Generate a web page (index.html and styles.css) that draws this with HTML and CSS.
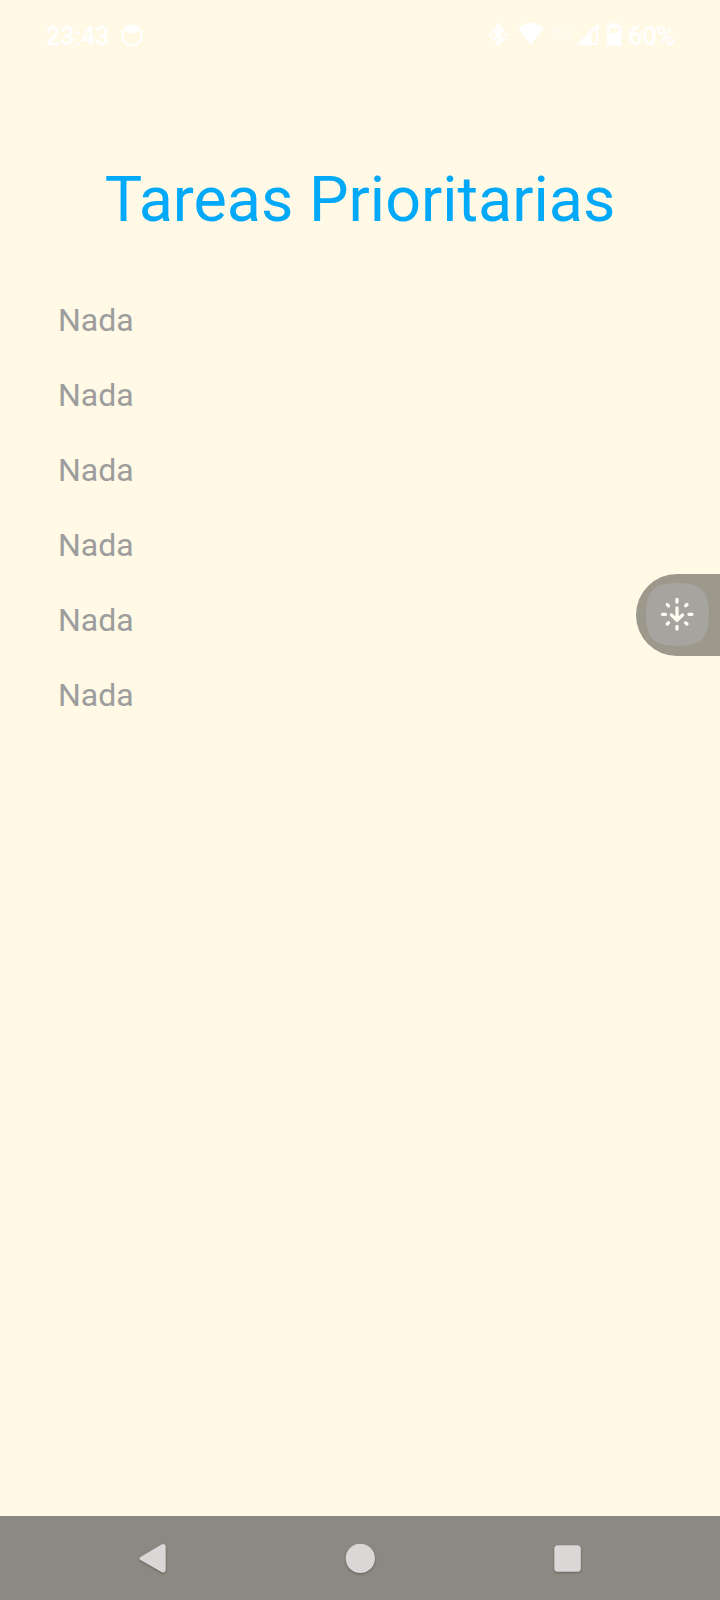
FILE: index.html
```html
<!DOCTYPE html>
<html lang="es">
<head>
<meta charset="utf-8">
<title>Tareas Prioritarias</title>
<link rel="stylesheet" href="styles.css">
</head>
<body>
<div class="screen">
  <header class="status">
    <span class="status-text">23:43</span>
    <svg class="app" width="22" height="24" viewBox="0 0 22 24"><circle cx="11" cy="12.3" r="9.8" fill="none" stroke="currentColor" stroke-width="2"/><path d="M4.500 5Q11-.5 17.500 5L17.300 9L15.500 8.200L15 10.500Q11 8.500 7.500 10.500L6.500 8.800L4.800 9.800Z" fill="currentColor"/></svg>
    <span class="spacer"></span>
    <svg class="bt" width="20" height="24" viewBox="0 0 20 24"><path d="M4 6L14 16.500L9 21.500V2L14 7L4 17.500" fill="none" stroke="currentColor" stroke-width="2.500"/><circle cx="1.700" cy="11.800" r="1.700" fill="currentColor"/><circle cx="17" cy="11.800" r="1.700" fill="currentColor"/></svg>
    <svg class="wifi" width="26" height="24" viewBox="0 0 26 24"><path d="M0 5Q13-5 26 5L13 21.800Z" fill="currentColor"/></svg>
    <span class="network">4G</span>
    <svg class="signal" width="23" height="24" viewBox="0 0 23 24"><path fill-rule="evenodd" d="M0 22L22 0V22ZM15.500 10V20H20V5.500Z" fill="currentColor"/></svg>
    <svg class="battery" width="15" height="24" viewBox="0 0 15 24"><path fill-rule="evenodd" d="M4 0H11V2H13Q14.500 2 14.500 3.500V21.500Q14.500 23 13 23H1.500Q0 23 0 21.500V3.500Q0 2 1.500 2H4ZM2.700 5V10.300H11.800V5Z" fill="currentColor"/></svg>
    <span class="status-text">60%</span>
  </header>
  <main class="content">
    <h1 class="title">Tareas Prioritarias</h1>
    <ul class="tasks">
      <li>Nada</li>
      <li>Nada</li>
      <li>Nada</li>
      <li>Nada</li>
      <li>Nada</li>
      <li>Nada</li>
    </ul>
  </main>
  <nav class="navbar">
    <svg class="nav-icon" width="40" height="40" viewBox="0 0 40 40"><path d="M8.500 19L29.500 6.500Q33 5 33.700 8.500V32Q33 35.700 29.500 34L8.500 22Q6 20.500 8.500 19Z" fill="currentColor"/></svg>
    <svg class="nav-icon" width="40" height="40" viewBox="0 0 40 40"><circle cx="20.300" cy="20.400" r="14.600" fill="currentColor"/></svg>
    <svg class="nav-icon" width="40" height="40" viewBox="0 0 40 40"><rect x="6.300" y="7.200" width="26.500" height="26.500" rx="3.500" fill="currentColor"/></svg>
  </nav>
  <div class="handle">
    <svg width="63" height="63" viewBox="0 0 63 63"><path d="M31.500 0C55 0 63 8 63 31.500S55 63 31.500 63S0 55 0 31.500S8 0 31.500 0Z" fill="#a5a49f"/><g fill="none" stroke="#fffcf2" stroke-width="3.300" stroke-linecap="round" stroke-linejoin="round"><path d="M31 16.500V19M31 43.500V46M16.500 31.300H19.500M43 31.300H46M21.300 21.600L22.500 22.800M41 21.600L39.600 22.800M21.300 41L22.500 39.800M41 41L39.600 39.800"/><path d="M31 25V37M25.500 32L31 37.300L36.500 32" stroke-linejoin="miter"/></g></svg>
  </div>
</div>
</body>
</html>
```
FILE: styles.css
```css
body { margin: 0; }
.screen {
  position: relative;
  display: flex;
  flex-direction: column;
  width: 720px;
  height: 1600px;
  overflow: hidden;
  background: #fff9e6;
  font-family: Roboto, sans-serif;
}
.status {
  display: flex;
  align-items: center;
  box-sizing: border-box;
  height: 70px;
  padding: 0 45px 0 46px;
  color: #fff;
}
.status svg { flex: none; }
.status-text { padding-top: 4px; font-size: 25px; font-weight: 500; line-height: 30px; }
.app { margin-left: 12px; }
.spacer { flex: 1; }
.wifi { margin-left: 9px; }
.network {
  width: 21px;
  margin: 0 4px 5px 7px;
  color: #fffbf0;
  font-size: 17px;
  font-weight: 500;
  line-height: 20px;
}
.battery { margin: 0 6px 0 8px; }
.content { flex: 1; padding-top: 92px; }
.title {
  margin: 0;
  color: #03a9f9;
  font-size: 62.8px;
  font-weight: 400;
  line-height: 75px;
  text-align: center;
}
.tasks {
  margin: 46px 0 0;
  padding: 0 0 0 58px;
  color: #9d9d9d;
  font-size: 32px;
  line-height: 75px;
  list-style: none;
}
.navbar {
  display: flex;
  justify-content: space-between;
  box-sizing: border-box;
  height: 84px;
  padding: 22px 132px 0;
  background: #8a8982;
  color: #d9d8d6;
}
.nav-icon { filter: drop-shadow(0 1px 1px rgba(0, 0, 0, .3)); }
.handle {
  position: absolute;
  top: 573.5px;
  right: 0;
  box-sizing: border-box;
  width: 84px;
  height: 82px;
  padding: 9.5px 0 0 10px;
  border-radius: 42px 0 0 42px;
  background: #9c988c;
}
```
